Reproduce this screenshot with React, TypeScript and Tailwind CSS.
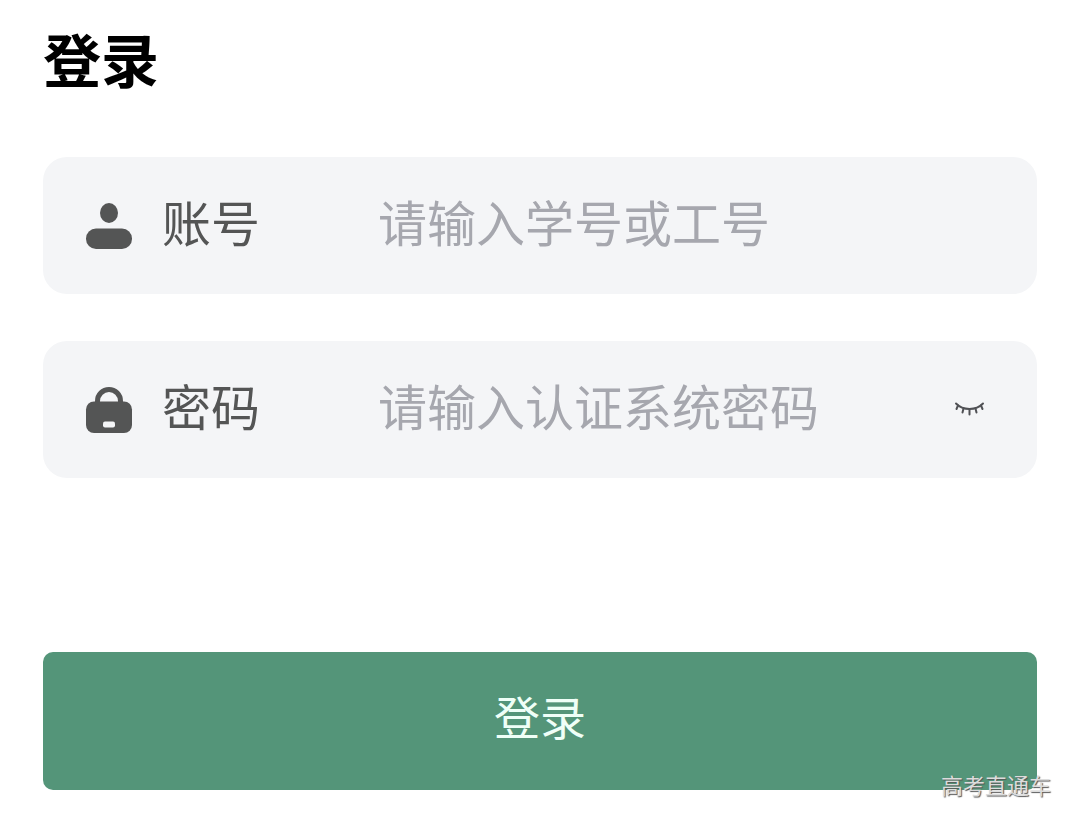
import { useState } from 'react';
import type { FormEvent, InputHTMLAttributes, ReactNode } from 'react';

interface FieldProps extends InputHTMLAttributes<HTMLInputElement> {
  id: string;
  label: string;
  icon: ReactNode;
  action?: ReactNode;
}

function UserIcon() {
  return (
    <svg viewBox="0 0 48 48" className="w-12 h-12 shrink-0" fill="#545555" aria-hidden="true">
      <ellipse cx="24" cy="11" rx="9" ry="10" />
      <rect x="1" y="26.500" width="46" height="20.500" rx="10" />
    </svg>
  );
}

function LockIcon() {
  return (
    <svg viewBox="0 0 48 48" className="w-12 h-12 shrink-0" aria-hidden="true">
      <path d="M12.500 19V15a11.500 11.500 0 0 1 23 0V19" fill="none" stroke="#545555" strokeWidth="5" />
      <rect x="1" y="15.500" width="46" height="31.500" rx="8" fill="#545555" />
      <rect x="18" y="35.500" width="12" height="6" rx="2" fill="#f4f5f7" />
    </svg>
  );
}

function ClosedEyeIcon() {
  return (
    <svg
      viewBox="0 0 32 16"
      className="w-8 h-4"
      fill="none"
      stroke="#505155"
      strokeWidth="2"
      strokeLinecap="round"
      aria-hidden="true"
    >
      <path d="M2 1.500c3.500 3.600 8.500 5.500 13.500 5.500s10-1.900 13.500-5.500" />
      <path d="M4 3.500 2.500 7M9.500 6.500 8.500 10.500M15.500 7v5.500M21.500 6.500l1 4M27 3.500l1.500 3.500" />
    </svg>
  );
}

function Field({ id, label, icon, action, ...inputProps }: FieldProps) {
  return (
    <div className="flex items-center h-[137px] pl-[42px] pr-[51px] rounded-3xl bg-[#f4f5f7]">
      {icon}
      <label htmlFor={id} className="w-[216px] ml-[29px] pb-2.5 shrink-0 text-[49px] leading-[72px] text-[#545555]">
        {label}
      </label>
      <input
        id={id}
        className="flex-1 min-w-0 pb-2.5 bg-transparent text-[49px] leading-[72px] text-[#545555] placeholder:text-[#a6a7ae] outline-none"
        {...inputProps}
      />
      {action}
    </div>
  );
}

export default function App() {
  const [account, setAccount] = useState('');
  const [password, setPassword] = useState('');
  const [showPassword, setShowPassword] = useState(false);

  const handleSubmit = (e: FormEvent) => {
    e.preventDefault();
  };

  return (
    <main className="relative min-h-screen px-[43px] pt-4 pb-9 bg-white font-['Noto_Sans_CJK_SC',sans-serif]">
      <h1 className="text-[58px] leading-[84px] font-bold text-black">登录</h1>

      <form onSubmit={handleSubmit} className="mt-[57px]">
        <div className="flex flex-col gap-[47px]">
          <Field
            id="account"
            label="账号"
            icon={<UserIcon />}
            placeholder="请输入学号或工号"
            autoComplete="username"
            value={account}
            onChange={(e) => setAccount(e.target.value)}
          />
          <Field
            id="password"
            label="密码"
            icon={<LockIcon />}
            type={showPassword ? 'text' : 'password'}
            placeholder="请输入认证系统密码"
            autoComplete="current-password"
            value={password}
            onChange={(e) => setPassword(e.target.value)}
            action={
              <button
                type="button"
                aria-label="显示密码"
                aria-pressed={showPassword}
                onClick={() => setShowPassword(!showPassword)}
                className="shrink-0 cursor-pointer"
              >
                <ClosedEyeIcon />
              </button>
            }
          />
        </div>

        <button
          type="submit"
          className="w-full h-[138px] mt-[174px] pb-3 rounded-[10px] bg-[#549579] text-[46px] leading-[68px] text-[#effff7] cursor-pointer"
        >
          登录
        </button>
      </form>

      {/* Watermark */}
      <span className="absolute right-[29px] bottom-[26px] text-[22px] leading-8 text-[#dcdcdc] [text-shadow:1px_1px_1px_#555]">
        高考直通车
      </span>
    </main>
  );
}
